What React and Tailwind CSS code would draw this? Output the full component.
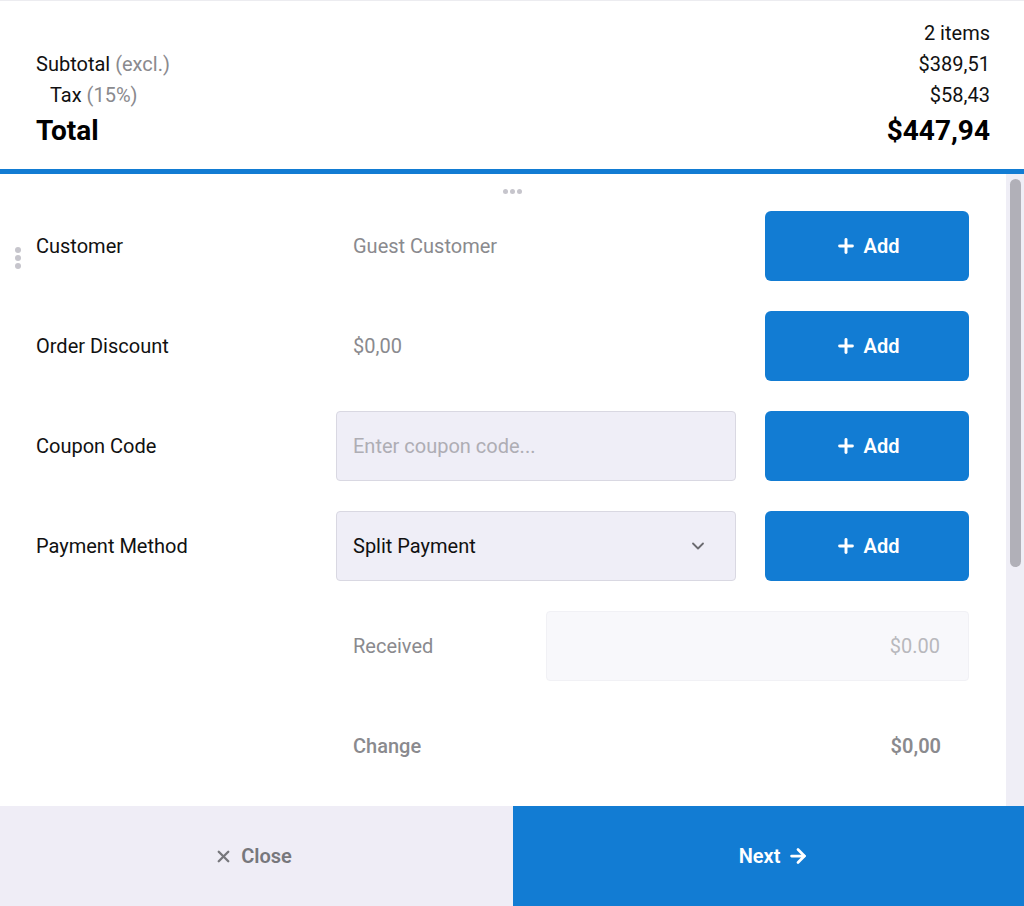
import { Plus, X, ArrowRight, ChevronDown } from "lucide-react";

const font = { fontFamily: "Roboto, 'Noto Sans', sans-serif" };

function AddButton() {
  return (
    <button className="w-[204px] h-[70px] rounded-[6px] bg-[#127cd3] text-white text-[20px] font-semibold flex items-center justify-center gap-[7px]">
      <Plus size={22} strokeWidth={3.2} />
      Add
    </button>
  );
}

function Row({ label, children, button = true }) {
  return (
    <div className="h-[100px] flex items-center pl-[36px] pr-[37px]">
      <div className="w-[300px] text-[20px] text-[#111]">{label}</div>
      <div className="w-[400px]">{children}</div>
      <div className="ml-auto">{button && <AddButton />}</div>
    </div>
  );
}

export default function App() {
  return (
    <div className="w-[1024px] h-[906px] flex flex-col bg-white border-t border-[#ececf0] overflow-hidden" style={font}>
      {/* Totals */}
      <div className="h-[168px] pt-[17px] pl-[36px] pr-[34px] text-[20px] text-[#111]">
        <div className="leading-[31px] text-right">2 items</div>
        <div className="leading-[31px] flex justify-between">
          <span>Subtotal <span className="text-[#8a8a8e]">(excl.)</span></span>
          <span>$389,51</span>
        </div>
        <div className="leading-[31px] flex justify-between">
          <span className="pl-[14px]">Tax <span className="text-[#8a8a8e]">(15%)</span></span>
          <span>$58,43</span>
        </div>
        <div className="leading-[40px] flex justify-between text-[28px] font-bold text-black">
          <span>Total</span>
          <span>$447,94</span>
        </div>
      </div>
      <div className="h-[5px] bg-[#127cd3]" />

      {/* Scroll area */}
      <div className="flex-1 flex relative">
        <div className="absolute left-[15px] top-[73px] flex flex-col gap-[2px]">
          <span className="w-[6px] h-[6px] rounded-full bg-[#c6c5cc]" />
          <span className="w-[6px] h-[6px] rounded-full bg-[#c6c5cc]" />
          <span className="w-[6px] h-[6px] rounded-full bg-[#c6c5cc]" />
        </div>
        <div className="flex-1">
          <div className="h-[22px] pt-[15px] flex justify-center gap-[2px] pl-[18px]">
            <span className="w-[5px] h-[5px] rounded-full bg-[#c6c5cc]" />
            <span className="w-[5px] h-[5px] rounded-full bg-[#c6c5cc]" />
            <span className="w-[5px] h-[5px] rounded-full bg-[#c6c5cc]" />
          </div>
          <Row label="Customer">
            <div className="pl-[17px] text-[20px] text-[#8a8a8e]">Guest Customer</div>
          </Row>
          <Row label="Order Discount">
            <div className="pl-[17px] text-[20px] text-[#8a8a8e]">$0,00</div>
          </Row>
          <Row label="Coupon Code">
            <div className="h-[70px] rounded-[4px] bg-[#efeef7] border border-[#d9d8e2] flex items-center px-[16px] text-[20px] text-[#aeadb4]">
              Enter coupon code...
            </div>
          </Row>
          <Row label="Payment Method">
            <div className="h-[70px] rounded-[4px] bg-[#efeef7] border border-[#d9d8e2] flex items-center justify-between pl-[16px] pr-[27px] text-[20px] text-[#111]">
              Split Payment
              <ChevronDown size={20} strokeWidth={2.2} className="text-[#6b6b70]" />
            </div>
          </Row>
          <div className="h-[100px] flex items-center pl-[336px] pr-[37px]">
            <div className="w-[210px] pl-[17px] text-[20px] text-[#8a8a8e]">Received</div>
            <div className="flex-1 h-[70px] rounded-[4px] bg-[#f8f8fb] border border-[#f1f1f5] flex items-center justify-end pr-[28px] text-[20px] text-[#b8b8bd]">
              $0.00
            </div>
          </div>
          <div className="h-[100px] flex items-center justify-between pl-[353px] pr-[65px] text-[20px] font-medium text-[#8a8a8e]">
            <span>Change</span>
            <span className="font-semibold">$0,00</span>
          </div>
        </div>
        <div className="w-[18px] bg-[#efeef6] pt-[5px]">
          <div className="mx-auto w-[11px] h-[388px] rounded-full bg-[#b1b0b8]" />
        </div>
      </div>

      {/* Footer */}
      <div className="h-[100px] flex text-[20px] font-semibold">
        <button className="w-[513px] bg-[#efedf6] text-[#77777c] flex items-center justify-center gap-[8px] pr-[7px]">
          <X size={19} strokeWidth={3} />
          Close
        </button>
        <button className="flex-1 bg-[#127cd3] text-white flex items-center justify-center gap-[7px] pl-[11px]">
          Next
          <ArrowRight size={22} strokeWidth={3} />
        </button>
      </div>
    </div>
  );
}
